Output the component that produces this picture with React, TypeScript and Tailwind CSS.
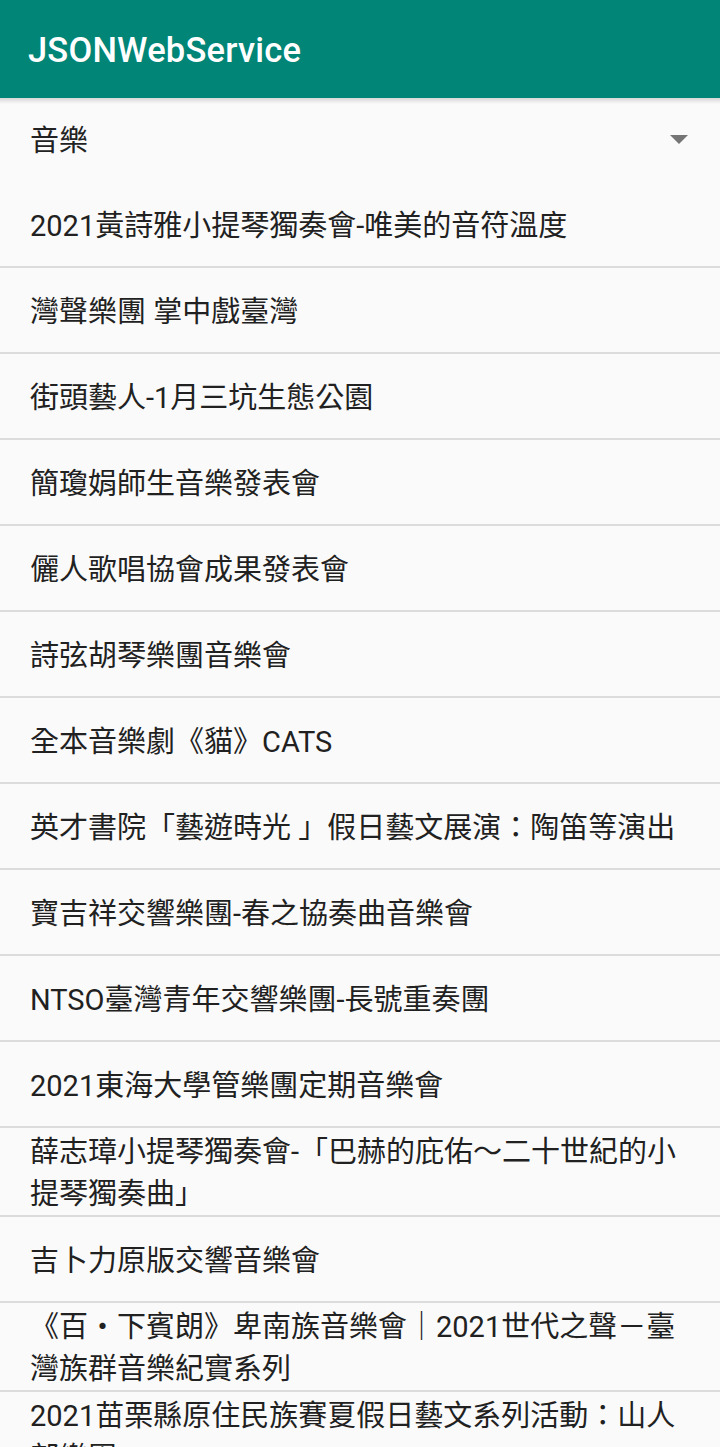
import React from "react";

const items = [
  "2021黃詩雅小提琴獨奏會-唯美的音符溫度",
  "灣聲樂團 掌中戲臺灣",
  "街頭藝人-1月三坑生態公園",
  "簡瓊娟師生音樂發表會",
  "儷人歌唱協會成果發表會",
  "詩弦胡琴樂團音樂會",
  "全本音樂劇《貓》CATS",
  "英才書院「藝遊時光 」假日藝文展演：陶笛等演出",
  "寶吉祥交響樂團-春之協奏曲音樂會",
  "NTSO臺灣青年交響樂團-長號重奏團",
  "2021東海大學管樂團定期音樂會",
  "薛志璋小提琴獨奏會-「巴赫的庇佑～二十世紀的小提琴獨奏曲」",
  "吉卜力原版交響音樂會",
  "《百・下賓朗》卑南族音樂會｜2021世代之聲－臺灣族群音樂紀實系列",
  "2021苗栗縣原住民族賽夏假日藝文系列活動：山人部樂團",
];

export default function App() {
  return (
    <div
      className="w-[720px] h-[1447px] overflow-hidden bg-[#fafafa] flex flex-col"
      style={{ fontFamily: 'Roboto, "Noto Sans CJK TC", sans-serif' }}
    >
      <div className="relative z-10 h-[98px] shrink-0 bg-[#008577] flex items-center px-[28px] pt-[4px]">
        <span className="text-white text-[34.5px] font-medium tracking-[0.2px]">JSONWebService</span>
        <div className="absolute left-0 right-0 top-full h-[6px] bg-gradient-to-b from-[#00000024] to-transparent" />
      </div>
      <div className="h-[84px] shrink-0 flex items-center justify-between pl-[30px] pr-[32px] pt-[4px]">
        <span className="text-[29px] text-[#222222]">音樂</span>
        <svg width="18" height="10" viewBox="0 0 18 10" className="-mt-[4px]">
          <polygon points="0,0 18,0 9,9" fill="#757575" />
        </svg>
      </div>
      <div className="flex flex-col">
        {items.map((t, i) => (
          <div key={i} className="border-b-2 border-[#dcdcdc]">
            <div className="min-h-[84px] flex items-center pl-[30px] pr-[28px] pt-[3px] pb-0 text-[29px] leading-[42px] text-[#212121]">
              {t}
            </div>
          </div>
        ))}
      </div>
    </div>
  );
}
